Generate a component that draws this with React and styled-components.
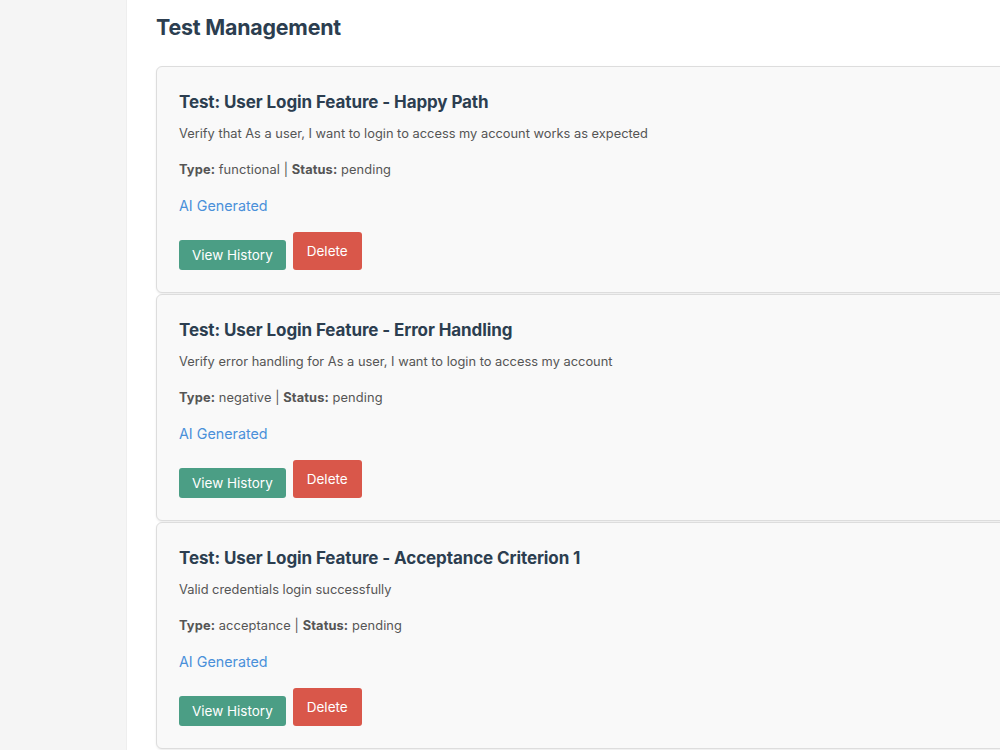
import React from 'react'
import styled, {createGlobalStyle} from 'styled-components'

const GlobalStyle = createGlobalStyle`
  html, body {
    margin: 0;
    padding: 0;
    background: #ffffff;
    overflow: hidden;
  }
  body {
    font-family: Inter, "Helvetica Neue", Arial, sans-serif;
  }
`

const Layout = styled.div`
  display: flex;
  min-height: 750px;
  width: 1200px;
`

const Sidebar = styled.aside`
  width: 126px;
  flex-shrink: 0;
  background-color: #f5f5f5;
  border-right: 1px solid #eeeeee;
`

const Main = styled.main`
  flex: 1;
  padding: 0 30px 0 29px;
  background: #ffffff;
`

const PageTitle = styled.h2`
  margin: 13px 0 0;
  height: 53px;
  font-size: 21.4px;
  line-height: 28px;
  font-weight: 700;
  color: #2c3e50;
  letter-spacing: -0.2px;
`

const Card = styled.div`
  background-color: #f9f9f9;
  border: 1px solid #dddddd;
  border-radius: 6px;
  box-shadow: 0 1px 2px rgba(0,0,0,0.08);
  padding: 23px 22px 22px;
  margin-bottom: 1px;
`

const Title = styled.h3`
  margin: 0;
  font-size: 17px;
  line-height: 24px;
  font-weight: 700;
  color: #2c3e50;
  letter-spacing: -0.1px;
`

const Paragraph = styled.p`
  margin: ${props => props.top}px 0 0;
  font-size: 12.85px;
  line-height: 20px;
  color: #555555;
  letter-spacing: ${props => props.spread || 0}px;
  b {
    color: #555555;
    font-weight: 700;
  }
`

const Tag = styled.p`
  margin: 15px 0 0;
  font-size: 14.3px;
  line-height: 22px;
  color: #4a90d9;
`

const Actions = styled.div`
  display: flex;
  align-items: flex-end;
  gap: 7px;
  margin-top: 15px;
`

const Button = styled.button`
  border: none;
  border-radius: 3px;
  color: #ffffff;
  font-family: inherit;
  font-size: 13.5px;
  line-height: 18px;
  cursor: pointer;
  background-color: ${props => props.danger ? '#d9574a' : '#4b9e85'};
  padding: ${props => props.danger ? '10px 14px' : '6px 13px'};
`

const tests = [
  {
    name: 'User Login Feature - Happy Path',
    description: 'Verify that As a user, I want to login to access my account works as expected',
    type: 'functional',
    status: 'pending',
  },
  {
    name: 'User Login Feature - Error Handling',
    description: 'Verify error handling for As a user, I want to login to access my account',
    type: 'negative',
    status: 'pending',
  },
  {
    name: 'User Login Feature - Acceptance Criterion 1',
    description: 'Valid credentials login successfully',
    type: 'acceptance',
    status: 'pending',
  },
]

const TestCard = ({test}) => (
  <Card>
    <Title>Test: {test.name}</Title>
    <Paragraph top={10}>{test.description}</Paragraph>
    <Paragraph top={16} spread={0.1}><b>Type:</b> {test.type} | <b>Status:</b> {test.status}</Paragraph>
    <Tag>AI Generated</Tag>
    <Actions>
      <Button>View History</Button>
      <Button danger>Delete</Button>
    </Actions>
  </Card>
)

const App = () => {
  return (
    <>
      <GlobalStyle />
      <Layout>
        <Sidebar />
        <Main>
          <PageTitle>Test Management</PageTitle>
          {tests.map(test => <TestCard key={test.name} test={test} />)}
        </Main>
      </Layout>
    </>
  )
}

export default App
